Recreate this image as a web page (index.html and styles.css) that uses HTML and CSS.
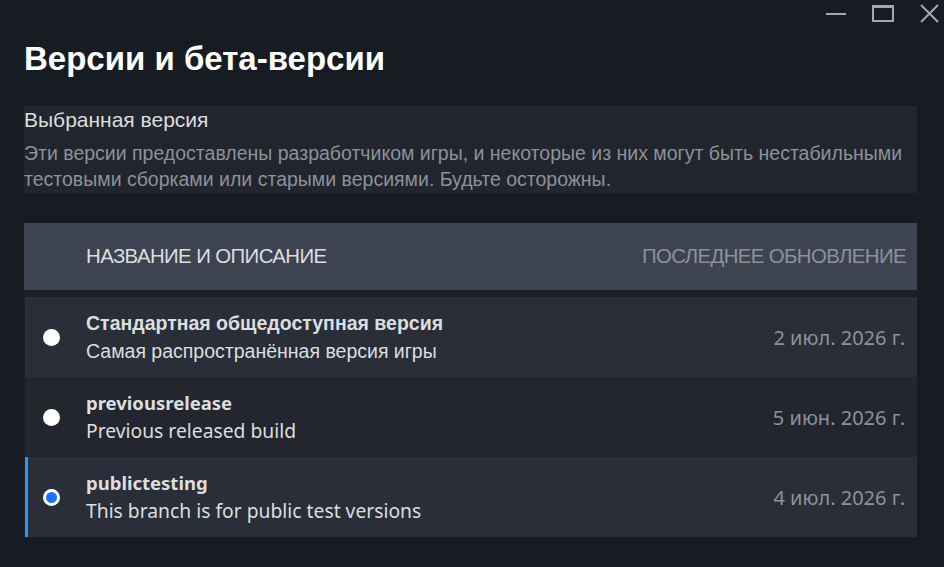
FILE: index.html
```html
<!DOCTYPE html>
<html lang="ru">
<head>
  <meta charset="UTF-8" />
  <meta name="viewport" content="width=device-width, initial-scale=1.0"/>
  <title>Версии и бета-версии</title>
  <link rel="stylesheet" href="styles.css">
</head>
<body>
  <div class="window">
    <!-- Кнопки окна -->
    <div class="titlebar">
      <button class="win-btn" title="Свернуть">
        <svg width="22" height="22" viewBox="0 0 22 22"><line x1="1" y1="12" x2="21" y2="12" stroke="currentColor" stroke-width="2"/></svg>
      </button>
      <button class="win-btn" title="Развернуть">
        <svg width="24" height="22" viewBox="0 0 24 22"><rect x="2" y="4" width="20" height="15" fill="none" stroke="currentColor" stroke-width="2"/><line x1="2" y1="4.5" x2="22" y2="4.5" stroke="currentColor" stroke-width="3"/></svg>
      </button>
      <button class="win-btn" title="Закрыть">
        <svg width="22" height="22" viewBox="0 0 22 22"><path d="M2 3 L19 20 M19 3 L2 20" stroke="currentColor" stroke-width="2"/></svg>
      </button>
    </div>

    <h1 class="page-title">Версии и бета-версии</h1>

    <div class="info-box">
      <div class="info-title">Выбранная версия</div>
      <div class="info-text">Эти версии предоставлены разработчиком игры, и некоторые из них могут быть нестабильными тестовыми сборками или старыми версиями. Будьте осторожны.</div>
    </div>

    <div class="branch-header">
      <span class="col-name">НАЗВАНИЕ И ОПИСАНИЕ</span>
      <span class="col-date">ПОСЛЕДНЕЕ ОБНОВЛЕНИЕ</span>
    </div>

    <div class="branch-list">
      <label class="branch-row">
        <input type="radio" name="branch" class="branch-radio" />
        <div class="branch-info">
          <div class="branch-name">Стандартная общедоступная версия</div>
          <div class="branch-desc">Самая распространённая версия игры</div>
        </div>
        <div class="branch-date">2 июл. 2026 г.</div>
      </label>
      <label class="branch-row">
        <input type="radio" name="branch" class="branch-radio" />
        <div class="branch-info" lang="en">
          <div class="branch-name">previousrelease</div>
          <div class="branch-desc">Previous released build</div>
        </div>
        <div class="branch-date">5 июн. 2026 г.</div>
      </label>
      <label class="branch-row">
        <input type="radio" name="branch" class="branch-radio" checked />
        <div class="branch-info" lang="en">
          <div class="branch-name">publictesting</div>
          <div class="branch-desc">This branch is for public test versions</div>
        </div>
        <div class="branch-date">4 июл. 2026 г.</div>
      </label>
    </div>
  </div>

  <script>
    // подсветка выбранной ветки
    const rows = document.querySelectorAll(".branch-row");

    function updateSelected() {
      rows.forEach(function (row) {
        const radio = row.querySelector(".branch-radio");
        row.classList.toggle("selected", radio.checked);
      });
    }

    rows.forEach(function (row) {
      row.querySelector(".branch-radio").addEventListener("change", updateSelected);
    });

    updateSelected();
  </script>
</body>
</html>
```

FILE: styles.css
```css
body {
  background-color: #171b22;
  color: #dcdedf;
  font-family: "Liberation Sans", Arial, sans-serif;
  margin: 0;
}

.window {
  padding: 0 27px 0 24px;
}

.titlebar {
  display: flex;
  justify-content: flex-end;
  gap: 24px;
  margin-right: -24px;
  height: 26px;
}

.win-btn {
  background-color: transparent;
  border: none;
  color: #a4a8ae;
  padding: 0;
  height: 26px;
  cursor: pointer;
}

.win-btn svg {
  display: block;
}

.page-title {
  font-size: 33px;
  font-weight: bold;
  color: #ffffff;
  margin: 12px 0 0 0;
  line-height: 42px;
}

.info-box {
  margin-top: 26px;
  background-color: #22252d;
  padding: 0 0 1px 0;
}

.info-title {
  font-size: 21px;
  line-height: 28px;
  color: #dcdedf;
}

.info-text {
  font-size: 19.5px;
  line-height: 26px;
  color: #8b929a;
  margin-top: 6px;
  padding-right: 8px;
}

.branch-header {
  margin-top: 30px;
  height: 67px;
  background-color: #3d4350;
  display: flex;
  align-items: center;
  justify-content: space-between;
  padding: 0 11px 0 62px;
  font-size: 20.4px;
  letter-spacing: -0.6px;
}

.col-name {
  color: #dcdedf;
}

.col-date {
  color: #8b929a;
}

.branch-list {
  background-color: #1c1f26;
  padding: 7px 0 0 1px;
}

.branch-row {
  display: flex;
  align-items: center;
  background-color: #2a2e38;
  padding: 12px 12px 12px 15px;
  border-left: 3px solid transparent;
  cursor: pointer;
}

.branch-row:nth-child(2) {
  background-color: #23262e;
}

.branch-row.selected {
  border-left-color: #1a9fff;
}

.branch-radio {
  appearance: none;
  width: 17px;
  height: 17px;
  margin: 0 26px 0 0;
  border-radius: 50%;
  background-color: #ffffff;
  flex-shrink: 0;
}

.branch-radio:checked {
  background-color: #1a73ff;
  border: 3px solid #ffffff;
}

.branch-info {
  flex: 1;
}

.branch-name {
  font-size: 19.5px;
  line-height: 28px;
  font-weight: bold;
  color: #dcdedf;
}

.branch-desc {
  font-size: 19.5px;
  line-height: 28px;
  color: #dcdedf;
}

.branch-info[lang="en"] .branch-name {
  font-family: "Noto Sans", "Liberation Sans", sans-serif;
  font-size: 18.5px;
}

.branch-info[lang="en"] .branch-desc {
  font-family: "Noto Sans", "Liberation Sans", sans-serif;
  font-size: 19.3px;
}

.branch-date {
  font-family: "Noto Sans", "Liberation Sans", sans-serif;
  font-size: 20px;
  color: #8b929a;
}
```
